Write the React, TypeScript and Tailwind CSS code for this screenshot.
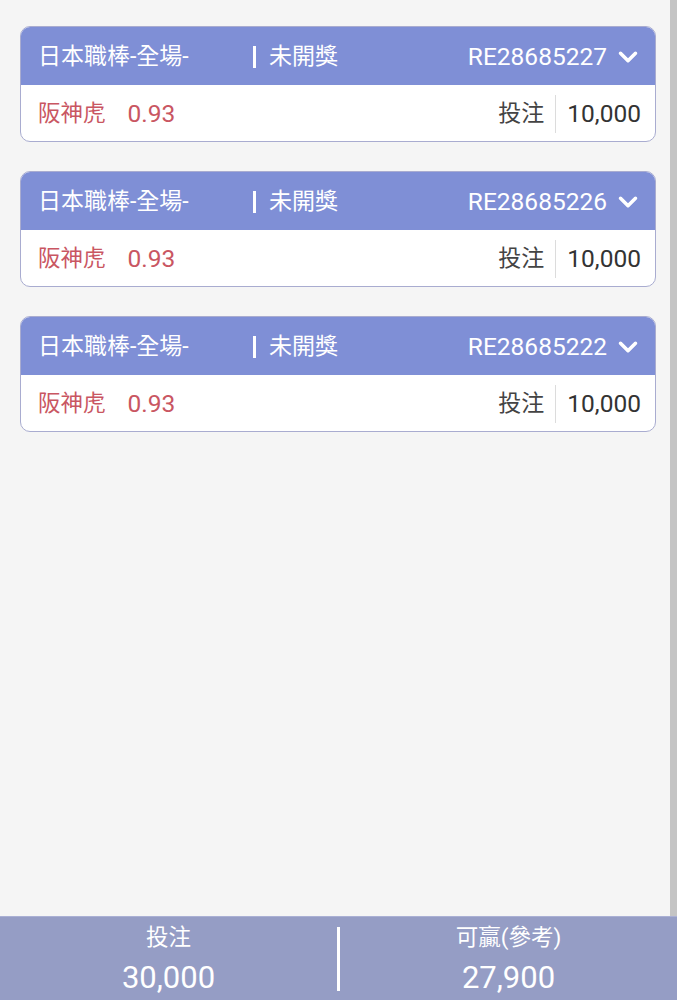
import { ChevronDown } from 'lucide-react';

const bets = ['RE28685227', 'RE28685226', 'RE28685222'];

function BetCard({ id }: { id: string }) {
    return (
        <div className="rounded-[10px] border border-[#a9acd0] bg-white overflow-hidden">
            <div className="flex items-center h-[58px] bg-[#7f8fd6] pl-[17px] pr-[14px] pt-[2px] text-white text-[23px]">
                <span className="w-[215px]">日本職棒-全場-</span>
                <span className="w-[3px] h-[22px] bg-white mr-[13px]" />
                <span>未開獎</span>
                <span className="ml-auto text-[24.5px]">{id}</span>
                <ChevronDown className="w-[30px] h-[30px] ml-[6px] -mr-[2px]" strokeWidth={2.8} />
            </div>
            <div className="flex items-center h-[56px] pl-[17px] pr-[14px] pt-[2px] text-[22.5px]">
                <span className="text-[#c95662]">阪神虎</span>
                <span className="text-[#c95662] ml-[22px] text-[24.5px]">0.93</span>
                <span className="ml-auto text-[#444] text-[23px]">投注</span>
                <span className="w-px h-[38px] bg-[#dcdcdc] mx-[11px]" />
                <span className="text-[#333] text-[24.5px]">10,000</span>
            </div>
        </div>
    );
}

export default function App() {
    return (
        <div
            className="w-[677px] h-[1000px] bg-[#f5f5f5] flex flex-col overflow-hidden"
            style={{ fontFamily: 'Roboto, "Noto Sans CJK TC", sans-serif' }}
        >
            <div className="flex flex-1 min-h-0">
                <div className="flex-1 flex flex-col gap-[29px] pt-[26px] pl-[20px] pr-[14px]">
                    {bets.map((id) => (
                        <BetCard key={id} id={id} />
                    ))}
                </div>
                <div className="w-[7px] bg-[#c4c4c4]" />
            </div>
            <div className="h-[84px] bg-[#959dc5] flex items-center text-white border-t border-[#aab0d4]">
                <div className="flex-1 flex flex-col items-center leading-none pt-[2px]">
                    <span className="text-[22.5px]">投注</span>
                    <span className="text-[31px] mt-[14px]">30,000</span>
                </div>
                <div className="w-[3px] h-[64px] bg-white" />
                <div className="flex-1 flex flex-col items-center leading-none pt-[2px]">
                    <span className="text-[22.5px]">可贏(參考)</span>
                    <span className="text-[31px] mt-[14px]">27,900</span>
                </div>
            </div>
        </div>
    );
}
